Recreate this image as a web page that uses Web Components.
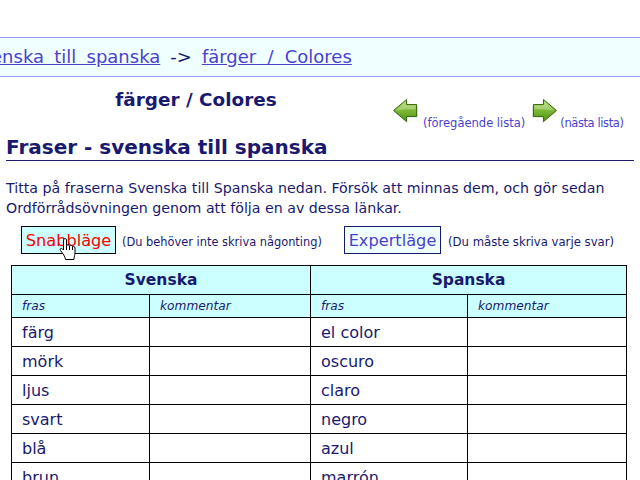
<!DOCTYPE html>
<html>
<head>
<meta charset="utf-8">
<style>
  html, body { margin: 0; padding: 0; background: #fff; overflow: hidden; height: 480px; }
  body { font-family: "DejaVu Sans", Verdana, sans-serif; color: #191970; }
</style>
</head>
<body>
<crumb-bar></crumb-bar>
<list-head></list-head>
<section-title>Fraser - svenska till spanska</section-title>
<intro-text>Titta på fraserna Svenska till Spanska nedan. Försök att minnas dem, och gör sedan Ordförrådsövningen genom att följa en av dessa länkar.</intro-text>
<mode-links></mode-links>
<phrase-table></phrase-table>

<script>
class CrumbBar extends HTMLElement {
  constructor() {
    super();
    this.attachShadow({ mode: 'open' });
  }
  connectedCallback() {
    this.shadowRoot.innerHTML = `
      <style>
        :host {
          display: block;
          margin-top: 37px;
          height: 38px;
          border-top: 1px solid #9999ff;
          border-bottom: 1px solid #9999ff;
          background: #f0ffff;
          overflow: hidden;
        }
        .line {
          display: flex;
          align-items: center;
          height: 36px;
          margin-left: -29px;
          font-size: 18px;
          word-spacing: 4.500px;
          white-space: nowrap;
          color: #191970;
        }
        a { color: #4b3fcf; text-decoration: underline; }
        a.last { word-spacing: 5.500px; }
        span { margin: 0 10px; word-spacing: 0; }
      </style>
      <div class="line"><a>svenska till spanska</a><span>-&gt;</span><a class="last">färger / Colores</a></div>
    `;
  }
}

class ListHead extends HTMLElement {
  constructor() {
    super();
    this.attachShadow({ mode: 'open' });
  }
  arrow(flip) {
    const id = flip ? 'g1' : 'g0';
    return `<svg width="26" height="26" viewBox="0 0 26 26" ${flip ? 'style="transform:scaleX(-1)"' : ''}>
      <defs><linearGradient id="${id}" x1="0" y1="0" x2="0" y2="1">
        <stop offset="0" stop-color="#b4dc78"/><stop offset="0.5" stop-color="#7cb834"/><stop offset="1" stop-color="#4f8f14"/>
      </linearGradient></defs>
      <path d="M2 13 L15 1.500 L15 7.500 L25.500 7.500 L25.500 18.500 L15 18.500 L15 24.500 Z" fill="#000" opacity=".15" transform="translate(0.500 1)"/>
      <path d="M1.500 12.500 L14.500 1.500 L14.500 6.500 L24.500 6.500 L24.500 18.500 L14.500 18.500 L14.500 23.500 Z" fill="url(#${id})" stroke="#3c6e10"/>
      <path d="M4 12.500 L13.500 4 L13.500 7.500 L23.500 7.500 L23.500 11.500 C16 11 10 12 4 12.500 Z" fill="#fff" opacity=".25"/>
    </svg>`;
  }
  connectedCallback() {
    this.shadowRoot.innerHTML = `
      <style>
        :host { display: flex; height: 57px; }
        h2 {
          margin: 12px 0 0 0;
          width: 392px;
          text-align: center;
          font-size: 18.400px;
          line-height: 22px;
          font-weight: bold;
          color: #191970;
        }
        .nav { display: flex; align-items: flex-start; padding-top: 21px; }
        .nav a {
          display: flex;
          align-items: flex-end;
          font-size: 11.500px;
          line-height: 14px;
          color: #4b3fcf;
          white-space: nowrap;
        }
        .nav a:first-child { margin-right: 7px; }
        .nav a:first-child svg { margin-right: 5px; }
        .nav a:last-child svg { margin-right: 2px; }
        .nav a:last-child span { letter-spacing: -0.400px; }
        .nav svg { display: block; flex: none; }
        .nav span { margin-bottom: -6px; }
      </style>
      <h2>färger / Colores</h2>
      <div class="nav">
        <a>${this.arrow(false)}<span>(föregående lista)</span></a>
        <a>${this.arrow(true)}<span>(nästa lista)</span></a>
      </div>
    `;
  }
}

class SectionTitle extends HTMLElement {
  constructor() {
    super();
    this.attachShadow({ mode: 'open' });
  }
  connectedCallback() {
    this.shadowRoot.innerHTML = `
      <style>
        :host {
          display: block;
          margin: 0 6px 0 6px;
          height: 26px;
          border-bottom: 1px solid #191970;
          font-size: 20px;
          line-height: 26px;
          font-weight: bold;
          color: #191970;
          white-space: nowrap;
        }
      </style>
      <slot></slot>
    `;
  }
}

class IntroText extends HTMLElement {
  constructor() {
    super();
    this.attachShadow({ mode: 'open' });
  }
  connectedCallback() {
    this.shadowRoot.innerHTML = `
      <style>
        :host {
          display: block;
          margin: 17px 0 0 6px;
          width: 625px;
          font-size: 14.200px;
          line-height: 20px;
          color: #191970;
        }
      </style>
      <slot></slot>
    `;
  }
}

class ModeLinks extends HTMLElement {
  constructor() {
    super();
    this.attachShadow({ mode: 'open' });
  }
  connectedCallback() {
    this.shadowRoot.innerHTML = `
      <style>
        :host { display: flex; position: relative; align-items: center; margin: 8px 0 0 21px; height: 28px; white-space: nowrap; }
        a {
          display: flex;
          align-items: center;
          justify-content: center;
          box-sizing: border-box;
          height: 28px;
          border: 1px solid #191970;
          font-size: 16.200px;
        }
        .fast { width: 95px; background: #ccffff; color: #ff0000; border-color: #000; }
        .expert { width: 97px; background: #f0ffff; color: #4b3fcf; }
        small { margin: 3px 0 0 6px; color: #191970; }
        .fast-note { width: 222px; font-size: 11.400px; }
        .expert-note { margin-left: 7px; font-size: 11.700px; }
        svg { position: absolute; left: 38px; top: 12px; }
      </style>
      <a class="fast">Snabbläge</a><small class="fast-note">(Du behöver inte skriva någonting)</small>
      <a class="expert">Expertläge</a><small class="expert-note">(Du måste skriva varje svar)</small>
      <svg width="18" height="23" viewBox="0 0 18 23">
        <path d="M4.500 1.500 C5 0.500 7 0.500 7.500 1.500 L7.500 7.500 C8.500 6.500 10 6.800 10.500 7.800 C11.500 7 13 7.300 13.500 8.500 C14.500 8 16 8.500 16 10 L16 15 C16 17 15 18 15 21.500 L6.500 21.500 C6 18 4 16 1.500 12.500 C0.500 11 2 9.500 3.500 11 L4.500 12 Z" fill="#fff" stroke="#000"/>
        <path d="M7.500 7.500 L7.500 12 M10.500 8 L10.500 12 M13.500 8.500 L13.500 12" fill="none" stroke="#000"/>
      </svg>
    `;
  }
}

class PhraseTable extends HTMLElement {
  constructor() {
    super();
    this.attachShadow({ mode: 'open' });
  }
  connectedCallback() {
    const rows = [
      ['färg', 'el color'],
      ['mörk', 'oscuro'],
      ['ljus', 'claro'],
      ['svart', 'negro'],
      ['blå', 'azul'],
      ['brun', 'marrón']
    ];
    this.shadowRoot.innerHTML = `
      <style>
        :host { display: block; margin: 11px 0 0 11px; width: 616px; }
        .grid {
          display: grid;
          grid-template-columns: 138px 161px 157px 159px;
          grid-template-rows: 29px 23px;
          grid-auto-rows: 29px;
          border: 1px solid #000;
          border-width: 1px 0 0 1px;
          background: #fff;
        }
        .grid > div {
          border: 1px solid #000;
          border-width: 0 1px 1px 0;
          padding-left: 10px;
          display: flex;
          align-items: center;
          font-size: 16px;
          color: #191970;
          white-space: nowrap;
        }
        .grid > .top {
          grid-column: span 2;
          justify-content: center;
          padding-left: 0;
          background: #ccffff;
          font-weight: bold;
          font-size: 15.500px;
        }
        .grid > .sub {
          background: #ccffff;
          font-style: italic;
          font-size: 12.200px;
        }
      </style>
      <div class="grid">
        <div class="top">Svenska</div>
        <div class="top">Spanska</div>
        <div class="sub">fras</div><div class="sub">kommentar</div>
        <div class="sub">fras</div><div class="sub">kommentar</div>
        ${rows.map(r => `<div>${r[0]}</div><div></div><div>${r[1]}</div><div></div>`).join('')}
      </div>
    `;
  }
}

customElements.define('crumb-bar', CrumbBar);
customElements.define('list-head', ListHead);
customElements.define('section-title', SectionTitle);
customElements.define('intro-text', IntroText);
customElements.define('mode-links', ModeLinks);
customElements.define('phrase-table', PhraseTable);
</script>
</body>
</html>
